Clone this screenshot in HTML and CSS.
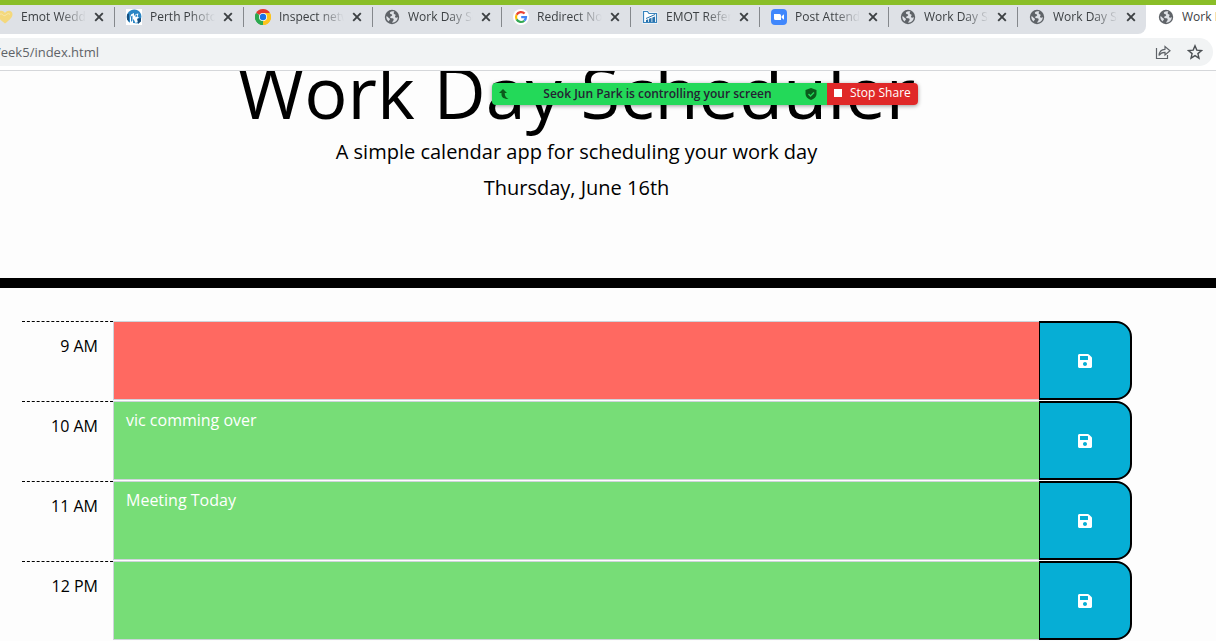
FILE: index.html
```
<!DOCTYPE html>
<html lang="en">
<head>
<meta charset="utf-8">
<title>Work Day Scheduler</title>
<link rel="stylesheet" href="styles.css">
</head>
<body>
<svg class="defs" aria-hidden="true">
  <symbol id="globe" viewBox="0 0 16 16">
    <circle cx="8" cy="8" r="7.2" fill="#5f6368"/>
    <path d="M8.6 2.2c-1.900.2-3.300 1.200-2.600 2.300.6.9 2.300.4 2.200 1.700-.1 1-2 .8-2.100 2 0 .9 1.300 1 2.200 1 1.300 0 1.500.9 1.300 1.900-.2.900-1.100 1.300-1.500 2.700 3.200.1 5.800-2.600 5.700-5.700-.8.900-2.500 1-2.800-.1-.2-1 1-1.400.6-2.300-.4-.8-1.700-.3-1.900-1.300-.1-.9.400-1.400.8-1.800-.6-.3-1.200-.4-1.900-.4zM2.300 7.300c1.500.2 1.800 1.400 3 1.900.9.400.8 1.600.1 2.100-.5.400-.7.800-.7 1.300-1.600-1.100-2.600-3.100-2.400-5.300z" fill="#dee1e6"/>
  </symbol>
  <symbol id="close" viewBox="0 0 16 16">
    <path d="M4.200 4.200l7.600 7.600M11.800 4.200l-7.600 7.600" stroke="#3c4043" stroke-width="1.900"/>
  </symbol>
  <symbol id="save" viewBox="0 0 448 512">
    <path fill="#fff" d="M433.900 129.900l-83.900-83.900A48 48 0 0 0 316.100 32H48C21.500 32 0 53.500 0 80v352c0 26.500 21.500 48 48 48h352c26.500 0 48-21.500 48-48V163.900a48 48 0 0 0-14.100-34zM224 416c-35.300 0-64-28.700-64-64s28.700-64 64-64 64 28.700 64 64-28.700 64-64 64zm96-304.500V212c0 6.600-5.400 12-12 12H76c-6.600 0-12-5.400-12-12V108c0-6.600 5.400-12 12-12h228.500c3.200 0 6.200 1.300 8.500 3.500l3.500 3.500a12 12 0 0 1 3.500 8.500z"/>
  </symbol>
</svg>

<header class="browser">
  <nav class="tab-bar" aria-label="Open tabs">
    <div class="tab-group">
      <div class="tab">
        <svg class="tab-icon" viewBox="0 0 16 16"><path d="M8 14.500C3 10.500.5 8.300.5 5.200.5 1.500 5.500.5 8 4c2.500-3.500 7.500-2.500 7.500 1.200 0 3.100-2.500 5.300-7.500 9.300z" fill="#f4d87c"/><path d="M3 5.500c2-2 3 2 5 1s3-3 5-1" stroke="#f9e9b0" fill="none"/></svg>
        <span class="tab-label">Emot Wedding</span>
        <button class="tab-close" aria-label="Close tab"><svg><use href="#close"/></svg></button>
      </div>
      <div class="tab">
        <svg class="tab-icon" viewBox="0 0 16 16"><path fill="#fff" d="M0 0h16v16H0z"/><path d="M3.500 13.500C-1 9.500.2 3.500 5 1.200c2.500-1 5-.8 7 .3 3.500 2.300 4.200 6 2.500 9.500l-3 3.500" fill="#2b86c5"/><path d="M4 16V9l1-3.500L8 4v3l2-2 2.500-.5-1 3 1.500 1-2 1.500 1 3-2.500 1-2-4L7 11v5z" fill="#fff"/><path d="M5 7.500l1.500-1v5L5 13zM9.500 6l1.500-.5v2l-1.500.8z" fill="#2b86c5"/><path d="M1 5.500l2-1v8l-2-2zM11.500 10l3.500-1v3.500L12 15z" fill="#174f7d"/></svg>
        <span class="tab-label">Perth PhotoBooth</span>
        <button class="tab-close" aria-label="Close tab"><svg><use href="#close"/></svg></button>
      </div>
      <div class="tab">
        <svg class="tab-icon" viewBox="0 0 16 16"><path d="M8 8L1.070 4A8 8 0 0 1 14.930 4z" fill="#e33b2e"/><path d="M8 8l6.930-4A8 8 0 0 1 8 16z" fill="#fcc31e"/><path d="M8 8v8A8 8 0 0 1 1.070 4z" fill="#2da94f"/><path d="M8 4h6.930A8 8 0 0 1 8 16l3.460-6z" fill="#fcc31e"/><path d="M1.070 4l3.470 6L8 12l-.5 4A8 8 0 0 1 1.070 4z" fill="#2da94f"/><circle cx="8" cy="8" r="4" fill="#fff"/><circle cx="8" cy="8" r="3.200" fill="#1a73e8"/></svg>
        <span class="tab-label">Inspect network</span>
        <button class="tab-close" aria-label="Close tab"><svg><use href="#close"/></svg></button>
      </div>
      <div class="tab">
        <svg class="tab-icon"><use href="#globe"/></svg>
        <span class="tab-label">Work Day Scheduler</span>
        <button class="tab-close" aria-label="Close tab"><svg><use href="#close"/></svg></button>
      </div>
      <div class="tab">
        <svg class="tab-icon" viewBox="0 0 16 16"><circle cx="8" cy="8" r="8" fill="#fff"/><g fill="none" stroke-width="2.200"><path d="M11.600 4.600A5 5 0 0 0 3.600 5.700" stroke="#ea4335"/><path d="M3.600 5.700a5 5 0 0 0 0 4.700" stroke="#fbbc05"/><path d="M3.600 10.400a5 5 0 0 0 7.700 1.300" stroke="#34a853"/><path d="M11.300 11.700A5 5 0 0 0 13 8.100H8.200" stroke="#4285f4"/></g></svg>
        <span class="tab-label">Redirect Notice</span>
        <button class="tab-close" aria-label="Close tab"><svg><use href="#close"/></svg></button>
      </div>
      <div class="tab">
        <svg class="tab-icon" viewBox="0 0 16 16"><path d="M1.500 13.500v-11h4l1.500 2h7.500v9z" fill="#fff" stroke="#f4f8fc" stroke-width="2.500"/><path d="M1.500 13.500v-11h4l1.500 2h7.500v9z" fill="#fff" stroke="#3a84bd" stroke-width="1.200"/><path d="M4 13v-2l2.200-.8V13zM7 13V9.800l2.500-1V13zM10.300 13V8.500L13 7.500V13z" fill="#2873ae"/><path d="M4 9.500L13 5.500" stroke="#2873ae"/></svg>
        <span class="tab-label">EMOT Referral</span>
        <button class="tab-close" aria-label="Close tab"><svg><use href="#close"/></svg></button>
      </div>
      <div class="tab">
        <svg class="tab-icon" viewBox="0 0 16 16"><rect width="16" height="16" rx="4" fill="#4087fc"/><path d="M3 5h5.500q1.500 0 1.500 1.500V11H4.500Q3 11 3 9.500zM10.600 7.200L13 5.300v5.400l-2.400-1.900z" fill="#fff"/></svg>
        <span class="tab-label">Post Attendee</span>
        <button class="tab-close" aria-label="Close tab"><svg><use href="#close"/></svg></button>
      </div>
      <div class="tab">
        <svg class="tab-icon"><use href="#globe"/></svg>
        <span class="tab-label">Work Day Scheduler</span>
        <button class="tab-close" aria-label="Close tab"><svg><use href="#close"/></svg></button>
      </div>
      <div class="tab">
        <svg class="tab-icon"><use href="#globe"/></svg>
        <span class="tab-label">Work Day Scheduler</span>
        <button class="tab-close" aria-label="Close tab"><svg><use href="#close"/></svg></button>
      </div>
    </div>
    <div class="tab tab-active">
      <svg class="tab-icon"><use href="#globe"/></svg>
      <span class="tab-label">Work Day Scheduler</span>
    </div>
  </nav>
  <div class="toolbar">
    <div class="address">
      <input class="url" type="text" aria-label="Address" value="/eek5/index.html">
      <button class="tool" aria-label="Share"><svg viewBox="0 0 16 16"><path d="M1.500 4v10.500h11V11M4 11.500C4.300 7.500 6.500 5.500 10 5.300V2.500l5 4.300-5 4.200V8.300C7.500 8.200 5.500 9.200 4 11.500z" fill="none" stroke="#5f6368" stroke-width="1.200"/></svg></button>
      <button class="tool" aria-label="Bookmark"><svg viewBox="0 0 16 16"><path d="M8 1.800l1.800 4.300 4.700.4-3.600 3.100 1.100 4.600L8 11.700l-4 2.500 1.100-4.600L1.500 6.500l4.700-.4z" fill="none" stroke="#4c5054" stroke-width="1.400"/></svg></button>
    </div>
  </div>
</header>

<main class="page">
  <section class="jumbotron">
    <h1 class="title">Work Day Scheduler</h1>
    <p class="lead">A simple calendar app for scheduling your work day</p>
    <p class="lead">Thursday, June 16th</p>
  </section>
  <section class="schedule">
    <form class="row">
      <label class="hour" for="h9">9 AM</label>
      <textarea class="entry entry-present" id="h9"></textarea>
      <button class="save" type="button" aria-label="Save 9 AM"><svg><use href="#save"/></svg></button>
    </form>
    <form class="row">
      <label class="hour" for="h10">10 AM</label>
      <textarea class="entry" id="h10" spellcheck="false">vic comming over</textarea>
      <button class="save" type="button" aria-label="Save 10 AM"><svg><use href="#save"/></svg></button>
    </form>
    <form class="row">
      <label class="hour" for="h11">11 AM</label>
      <textarea class="entry" id="h11" spellcheck="false">Meeting Today</textarea>
      <button class="save" type="button" aria-label="Save 11 AM"><svg><use href="#save"/></svg></button>
    </form>
    <form class="row">
      <label class="hour" for="h12">12 PM</label>
      <textarea class="entry" id="h12"></textarea>
      <button class="save" type="button" aria-label="Save 12 PM"><svg><use href="#save"/></svg></button>
    </form>
  </section>
</main>

<aside class="share-bar">
  <div class="share-status">
    <svg class="share-icon" viewBox="0 0 12 12"><path d="M5 1L1 5h2.500v1.500C3.500 9.500 6 11 10.500 11 8 9.800 6.800 8.500 6.700 5H9z" fill="#0b5a1c"/></svg>
    <span class="share-text">Seok Jun Park is controlling your screen</span>
    <svg class="share-icon" viewBox="0 0 12 12"><path d="M6 0l5.500 2v4c0 3-2.500 5-5.500 6C3 11 .5 9 .5 6V2z" fill="#0b5a1c"/><path d="M3.500 6l2 2 3.500-3.500" stroke="#23d959" stroke-width="1.400" fill="none"/></svg>
  </div>
  <button class="stop"><span class="stop-icon"></span>Stop Share</button>
</aside>
</body>
</html>
```
FILE: styles.css
```
* {
  box-sizing: border-box;
}

html {
  overflow: hidden;
}

body {
  margin: 0;
  background: #fdfdfd;
  color: #000;
  font-family: "Open Sans", "Noto Sans", sans-serif;
}

button {
  margin: 0;
  padding: 0;
  border: 0;
  background: none;
  font: inherit;
}

svg {
  display: block;
}

.defs {
  display: none;
}

/* Browser frame */
.browser {
  position: relative;
  z-index: 1;
  background: #fff;
  border-top: 5px solid #8abe28;
  border-bottom: 1px solid #d5d7da;
}

.tab-bar {
  display: flex;
  overflow: hidden;
  height: 29px;
}

.tab-group {
  display: flex;
  flex: none;
  margin-left: -15px;
  background: #dee1e6;
  border-bottom-right-radius: 8px;
}

.tab {
  display: flex;
  flex: none;
  align-items: center;
  width: 129px;
  height: 24px;
  padding: 0 7px 0 12px;
}

.tab-group .tab {
  background: linear-gradient(#85888c, #85888c) 0 2px / 1px 20px no-repeat;
}

.tab-icon {
  flex: none;
  width: 16px;
  height: 16px;
}

.tab-label {
  flex: 1;
  overflow: hidden;
  min-width: 0;
  margin-left: 8px;
  color: #3c4043;
  font-size: 12px;
  line-height: 16px;
  white-space: nowrap;
  -webkit-mask-image: linear-gradient(90deg, #000 60%, transparent);
  mask-image: linear-gradient(90deg, #000 60%, transparent);
}

.tab-active .tab-label {
  -webkit-mask-image: none;
  mask-image: none;
}

.tab-close {
  flex: none;
  margin-left: 5px;
}

.tab-close svg {
  width: 16px;
  height: 16px;
}

.toolbar {
  padding: 4px 3px 4px 0;
}

.address {
  display: flex;
  align-items: center;
  gap: 16px;
  height: 28px;
  padding-right: 10px;
  background: #f1f3f4;
  border-radius: 0 14px 14px 0;
}

.url {
  flex: 1;
  min-width: 0;
  margin-left: -4px;
  padding: 0;
  border: 0;
  background: none;
  color: #5f6368;
  font: 13px/20px "Open Sans", "Noto Sans", sans-serif;
}

.tool svg {
  width: 16px;
  height: 16px;
}

/* Scrolled page */
.page {
  margin-top: -16px;
}

.jumbotron {
  padding: 0 63px 69px 0;
  border-bottom: 10px solid #000;
  text-align: center;
}

.title {
  margin: 0 0 10px;
  font-size: 72px;
  font-weight: 400;
  line-height: 72px;
}

.lead {
  margin: 0 0 6px;
  font-size: 20px;
  font-weight: 400;
  line-height: 30px;
}

.schedule {
  padding: 33px 84px 0 22px;
}

.row {
  display: grid;
  grid-template-columns: 91fr 926fr 93fr;
  height: 80px;
  padding-bottom: 1px;
}

.hour {
  padding: 12px 15px 0 0;
  border-top: 1px dashed #000;
  font-size: 16px;
  line-height: 24px;
  text-align: right;
}

.entry {
  width: 100%;
  margin: 0;
  padding: 6px 12px;
  border: 1px solid #ced4da;
  border-right: 0;
  background: #77dd77;
  color: #fff;
  font: 16px/24px "Open Sans", "Noto Sans", sans-serif;
  resize: none;
}

.entry-present {
  background: #ff6961;
}

.save {
  display: flex;
  align-items: center;
  justify-content: center;
  border: 2px solid #000;
  border-left-width: 1px;
  border-radius: 0 16px 16px 0;
  background: #06aed5;
}

.save svg {
  width: 14px;
  height: 16px;
}

/* Screen sharing bar, floats over the page */
.share-bar {
  position: absolute;
  z-index: 2;
  top: 83px;
  left: 492px;
  display: flex;
  width: 426px;
  height: 22px;
  overflow: hidden;
  border-radius: 4px;
  box-shadow: 0 1px 4px #0006;
  font-size: 12px;
  line-height: 20px;
}

.share-status {
  display: flex;
  flex: 1;
  align-items: center;
  padding: 0 10px 0 6px;
  background: #23d959;
}

.share-icon {
  width: 12px;
  height: 12px;
}

.share-text {
  flex: 1;
  color: #232333;
  font-weight: 600;
  text-align: center;
}

.stop {
  display: flex;
  flex: 0 0 91px;
  align-items: center;
  gap: 8px;
  padding: 0 0 2px 7px;
  background: #e02828;
  color: #fff;
  font-weight: 500;
}

.stop-icon {
  width: 8px;
  height: 8px;
  background: #fff;
}
```
